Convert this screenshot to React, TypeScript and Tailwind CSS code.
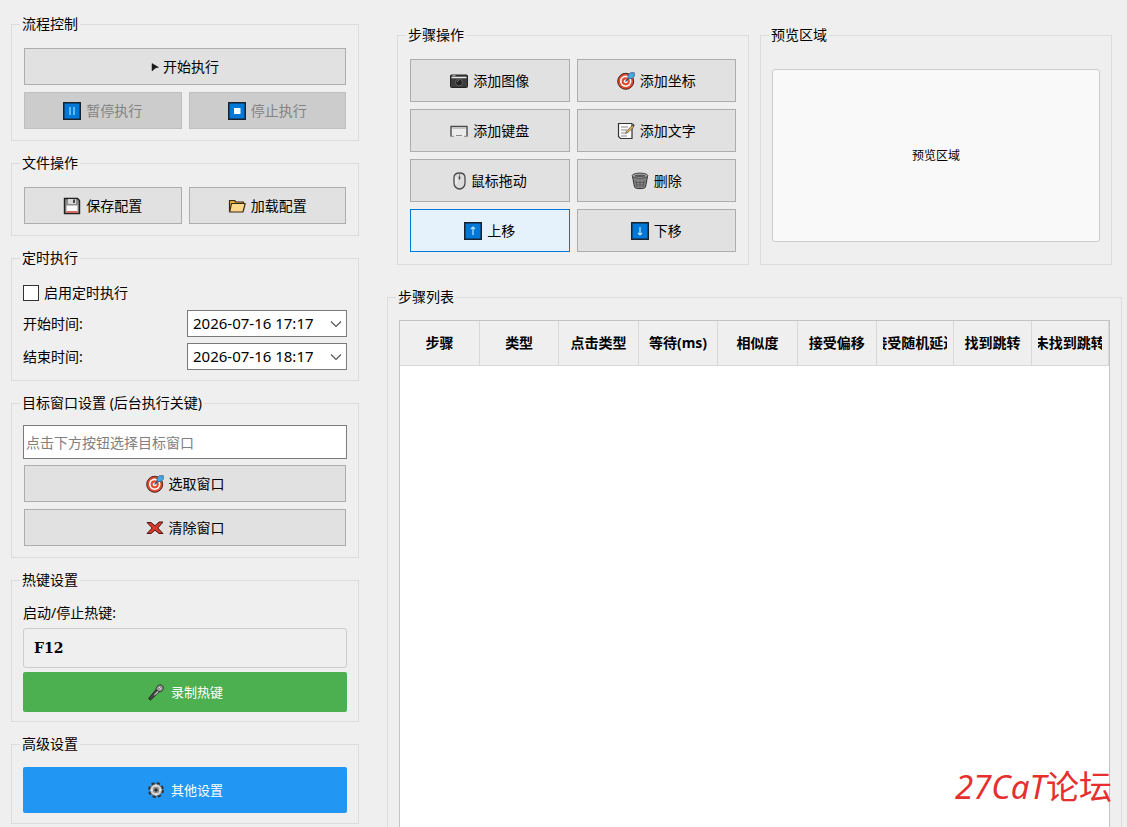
import { useState } from "react";
import type { ReactNode } from "react";
import clsx from "clsx";

type IconName =
  | "play" | "pause" | "stop" | "save" | "folder" | "target" | "cross" | "mic" | "gear"
  | "camera" | "keyboard" | "memo" | "mouse" | "trash" | "up" | "down";

const ICONS: Record<IconName, ReactNode> = {
  play: <path d="M1 5.500l6.500 3.800-3 .7L1 13z" fill="#1a1a1a" stroke="#1a1a1a" strokeWidth=".5" />,
  pause: (
    <>
      <rect x=".75" y=".75" width="16.500" height="16.500" fill="#0078d7" stroke="#16232e" strokeWidth="1.500" />
      <path d="M7 5v8M11 5v8" stroke="#7fd0ff" strokeWidth="1.500" />
    </>
  ),
  stop: (
    <>
      <rect x=".75" y=".75" width="16.500" height="16.500" fill="#0078d7" stroke="#16232e" strokeWidth="1.500" />
      <rect x="6" y="6" width="6.500" height="6" fill="#fff" />
    </>
  ),
  up: (
    <>
      <rect x=".75" y=".75" width="16.500" height="16.500" fill="#0078d7" stroke="#16232e" strokeWidth="1.500" />
      <path d="M9 13V5M7 7l2-2 2 2" fill="none" stroke="#b8e4ff" strokeWidth="1.200" />
    </>
  ),
  down: (
    <>
      <rect x=".75" y=".75" width="16.500" height="16.500" fill="#0078d7" stroke="#16232e" strokeWidth="1.500" />
      <path d="M9 5v8M7 11l2 2 2-2" fill="none" stroke="#b8e4ff" strokeWidth="1.200" />
    </>
  ),
  save: (
    <>
      <path d="M1.500 1.500h13L16.500 3.500v13h-15z" fill="#8c8c8c" stroke="#222" strokeWidth="1.400" />
      <rect x="5" y="2" width="8" height="5" fill="#d8d8d8" />
      <rect x="10" y="2.500" width="2" height="3.500" fill="#444" />
      <rect x="3.500" y="8.500" width="11" height="7.500" fill="#fafafa" />
      <path d="M3.500 15h11" stroke="#c8372d" strokeWidth="1.500" />
    </>
  ),
  folder: (
    <>
      <path d="M1.500 14.500V3.500h5l1.500 1.500h7.500V7" fill="#e5a93c" stroke="#3a2b14" strokeWidth="1.200" strokeLinejoin="round" />
      <path d="M1.700 15L3.500 6.500h13.700l-2.200 8.500z" fill="#fdd78b" stroke="#3a2b14" strokeWidth="1.200" strokeLinejoin="round" />
    </>
  ),
  target: (
    <>
      <circle cx="8.700" cy="9.300" r="8" fill="#e04a2f" stroke="#4a201a" />
      <circle cx="8.700" cy="9.300" r="5.700" fill="#fff" />
      <circle cx="8.700" cy="9.300" r="4.100" fill="#e04a2f" />
      <circle cx="8.700" cy="9.300" r="1.900" fill="#fff" />
      <path d="M8.500 9.500L13 5" stroke="#24577d" strokeWidth="1.300" />
      <path d="M11 6.500V3L13.500.7h3.800v3.500L15 6.500z" fill="#48a9e6" stroke="#24577d" strokeWidth=".7" />
    </>
  ),
  cross: <path d="M1 3.500h4L9 6.800 13 3h4l-5.200 6 5.200 5.500h-4L9 11.200l-4 3.300H1L6.200 9z" fill="#d8392b" stroke="#4a1712" strokeLinejoin="round" />,
  mic: (
    <>
      <path d="M1.500 15.500L9 6.500l3 2.500-8.500 8.200z" fill="#454545" stroke="#222" strokeWidth=".8" strokeLinejoin="round" />
      <path d="M9 6.500C9 3.500 12 1.500 14 2c2 .6 3 3 1.800 4.800-.8 1.400-2 2-3.800 2z" fill="#9b9b9b" stroke="#2b2b2b" />
      <path d="M7 12l3.500-4 1 1-3.800 3.500z" fill="#d5d5d5" />
      <path d="M12 4l2 2" stroke="#ddd" />
    </>
  ),
  gear: (
    <>
      <circle cx="9" cy="9" r="6.500" fill="none" stroke="#333" strokeWidth="3" strokeDasharray="3 2.100" />
      <circle cx="9" cy="9" r="6" fill="#d2d2d2" stroke="#4a4a4a" strokeWidth=".7" />
      <circle cx="9" cy="9" r="3.200" fill="#8a8a8a" />
      <circle cx="9" cy="9" r="1.500" fill="#222" />
      <path d="M9 3.500v2M9 12.500v2M3.500 9h2M12.500 9h2" stroke="#fff" />
    </>
  ),
  camera: (
    <>
      <rect x=".5" y="3" width="17" height="12.500" rx="1" fill="#3b3b3b" stroke="#222" />
      <path d="M1.500 5.500h15" stroke="#e6e6e6" strokeWidth="1.500" />
      <path d="M2.500 3.700h3" stroke="#bbb" />
      <circle cx="9" cy="10.500" r="3.500" fill="#222" stroke="#6c6c6c" strokeWidth=".8" />
      <path d="M7.500 9.500l1-1" stroke="#ccc" />
    </>
  ),
  keyboard: (
    <>
      <path d="M1 14.500V4.500h16v10" fill="#ececec" stroke="#4c4c4c" strokeWidth="1.400" />
      <path d="M2.500 6.500h13" stroke="#c2c2c2" />
      <path d="M1 14.300h3M6 13.500h6M14 14.300h3" stroke="#888" />
    </>
  ),
  memo: (
    <>
      <path d="M1.500 1.500h13.500v15h-11.500l-2-2z" fill="#fbfbfb" stroke="#333" strokeWidth="1.200" />
      <path d="M4 5h7M4 8h6M4 11h4M4 14h6" stroke="#8a8a8a" />
      <path d="M8.500 11.500l1-2.500 6-5.500 1.300 1.500-6 5.500z" fill="#f0b24d" stroke="#444" strokeWidth=".7" />
      <path d="M15 3.200l1.500-1.500 1.200 1.500-1.200 1.500z" fill="#444" />
    </>
  ),
  mouse: (
    <>
      <path d="M1 5.500C1 2.500 3 1 6.500 1S12 2.500 12 5.500V11c0 3.500-2.500 6-5.500 6S1 14.500 1 11z" fill="#dcdcdc" stroke="#4b4b4b" strokeWidth="1.300" />
      <path d="M6.500 2v6" stroke="#888" />
      <path d="M6.500 4.500v2.500" stroke="#444" strokeWidth="1.600" />
      <path d="M3 5v7" stroke="#fff" />
    </>
  ),
  trash: (
    <>
      <path d="M1.500 4.500l2 10.500c.5 2.200 10.500 2.200 11 0l2-10.500z" fill="#858585" stroke="#333" />
      <ellipse cx="9" cy="3.700" rx="7.800" ry="2.600" fill="#a8a8a8" stroke="#444" />
      <ellipse cx="9" cy="3.900" rx="5.500" ry="1.100" fill="#555" />
      <path d="M5 8l1 7M9 8v7.500M13 8l-1 7M4 10.500h10M4.500 13h9" stroke="#555" strokeWidth=".8" />
    </>
  ),
};

// narrow glyphs keep their own width so the label sits closer
const NARROW: Partial<Record<IconName, { box: string; width: string }>> = {
  play: { box: "0 0 9 18", width: "w-[9px]" },
  mouse: { box: "0 0 13 18", width: "w-[13px]" },
};

function Icon({ name }: { name: IconName }) {
  const narrow = NARROW[name];
  return (
    <svg
      className={clsx("h-[18px] shrink-0", narrow ? narrow.width : "w-[18px]")}
      viewBox={narrow ? narrow.box : "0 0 18 18"}
      aria-hidden="true"
    >
      {ICONS[name]}
    </svg>
  );
}

function Group({ title, className, children }: { title: string; className?: string; children: ReactNode }) {
  return (
    <fieldset className={clsx("min-w-0 border border-[#dcdcdc] px-[11px]", className)}>
      <legend className="-ml-[3px] px-0.5 leading-5">{title}</legend>
      {children}
    </fieldset>
  );
}

type ButtonProps = {
  icon: IconName;
  label: string;
  disabled?: boolean;
  active?: boolean;
  tall?: boolean;
};

function ToolButton({ icon, label, disabled, active, tall }: ButtonProps) {
  return (
    <button
      type="button"
      disabled={disabled}
      className={clsx(
        "flex items-center justify-center whitespace-nowrap border",
        icon === "play" ? "gap-[3px]" : "gap-[5px]",
        tall ? "h-[43px]" : "h-[37px]",
        disabled && "border-[#bfbfbf] bg-[#cccccc] text-[#838383]",
        active && "border-[#0078d7] bg-[#e5f1fb]",
        !disabled && !active && "border-[#adadad] bg-[#e1e1e1] hover:border-[#0078d7] hover:bg-[#e5f1fb]"
      )}
    >
      <Icon name={icon} />
      <span>{label}</span>
    </button>
  );
}

function TimeRow({ id, label, value }: { id: string; label: string; value: string }) {
  return (
    <div className="flex items-center justify-between">
      <label htmlFor={id}>{label}</label>
      <div className="relative w-40">
        <select
          id={id}
          defaultValue={value}
          className="block h-[27px] w-full appearance-none border border-[#7a7a7a] bg-white pb-0.5 pl-[5px] text-[15px] leading-5"
        >
          <option>{value}</option>
        </select>
        <svg className="pointer-events-none absolute right-[5px] top-2 h-3 w-3" viewBox="0 0 12 12" fill="none" stroke="#555" strokeWidth="1.200" aria-hidden="true">
          <path d="M1 3.500l5 5 5-5" />
        </svg>
      </div>
    </div>
  );
}

const STEP_BUTTONS: ButtonProps[] = [
  { icon: "camera", label: "添加图像" },
  { icon: "target", label: "添加坐标" },
  { icon: "keyboard", label: "添加键盘" },
  { icon: "memo", label: "添加文字" },
  { icon: "mouse", label: "鼠标拖动" },
  { icon: "trash", label: "删除" },
  { icon: "up", label: "上移", active: true },
  { icon: "down", label: "下移" },
];

const COLUMNS = ["步骤", "类型", "点击类型", "等待(ms)", "相似度", "接受偏移", "接受随机延迟", "找到跳转", "未找到跳转"];

export default function App() {
  const [timed, setTimed] = useState(false);

  return (
    <div className="relative flex h-screen gap-7 overflow-hidden bg-[#efefef] pl-[11px] pr-[5px] font-['Noto_Sans','Noto_Sans_CJK_SC',sans-serif] text-sm text-black">
      <aside className="flex w-[348px] shrink-0 flex-col gap-3 pt-3.5">
        <Group title="流程控制" className="pb-[11px]">
          <div className="grid grid-cols-2 gap-[7px] px-px pt-3.5">
            <div className="col-span-2 grid">
              <ToolButton icon="play" label="开始执行" />
            </div>
            <ToolButton icon="pause" label="暂停执行" disabled />
            <ToolButton icon="stop" label="停止执行" disabled />
          </div>
        </Group>

        <Group title="文件操作" className="pb-[11px]">
          <div className="grid grid-cols-2 gap-[7px] px-px pt-3.5">
            <ToolButton icon="save" label="保存配置" />
            <ToolButton icon="folder" label="加载配置" />
          </div>
        </Group>

        <Group title="定时执行" className="pb-2.5">
          <div className="flex flex-col gap-1.5 pt-3.5">
            <label className="flex h-[22px] items-center gap-[5px]">
              <input
                type="checkbox"
                checked={timed}
                onChange={(e) => setTimed(e.target.checked)}
                className="h-4 w-4 appearance-none border border-[#333] bg-white checked:bg-[#0078d7]"
              />
              启用定时执行
            </label>
            <TimeRow id="start-time" label="开始时间:" value="2026-07-16 17:17" />
            <TimeRow id="end-time" label="结束时间:" value="2026-07-16 18:17" />
          </div>
        </Group>

        <Group title="目标窗口设置 (后台执行关键)" className="pb-[11px]">
          <div className="flex flex-col gap-1.5 pt-3">
            <input
              type="text"
              readOnly
              aria-label="目标窗口"
              placeholder="点击下方按钮选择目标窗口"
              className="h-[34px] w-full border border-[#7a7a7a] bg-white px-0.5 placeholder:text-[#808080]"
            />
            <div className="grid gap-[7px] px-px">
              <ToolButton icon="target" label="选取窗口" />
              <ToolButton icon="cross" label="清除窗口" />
            </div>
          </div>
        </Group>

        <Group title="热键设置" className="pb-[9px]">
          <div className="flex flex-col gap-1 pt-3">
            <label htmlFor="hotkey" className="leading-[22px]">启动/停止热键:</label>
            <input
              id="hotkey"
              readOnly
              value="F12"
              className="h-10 w-full rounded-[3px] border border-[#cccccc] bg-[#efefef] px-2.5 font-['DejaVu_Serif',serif] font-bold"
            />
            <button type="button" className="flex h-10 items-center justify-center gap-1.5 rounded-[2px] bg-[#4caf50] text-[13px] text-white">
              <Icon name="mic" />
              录制热键
            </button>
          </div>
        </Group>

        <Group title="高级设置" className="pb-2.5">
          <div className="grid pt-[13px]">
            <button type="button" className="flex h-[46px] items-center justify-center gap-1.5 rounded-[2px] bg-[#2196f3] text-[13px] text-white">
              <Icon name="gear" />
              其他设置
            </button>
          </div>
        </Group>
      </aside>

      <main className="flex min-w-0 flex-1 flex-col gap-[22px] pt-[25px]">
        <div className="flex gap-[11px] px-2.5">
          <Group title="步骤操作" className="flex-1 pb-3">
            <div className="grid grid-cols-2 gap-[7px] px-px pt-3.5">
              {STEP_BUTTONS.map((b) => (
                <ToolButton key={b.label} {...b} tall />
              ))}
            </div>
          </Group>
          <Group title="预览区域" className="flex-1">
            <div className="pt-6">
              <div className="flex h-[173px] items-center justify-center rounded-[3px] border border-[#cccccc] bg-[#f9f9f9] text-xs">
                预览区域
              </div>
            </div>
          </Group>
        </div>

        <Group title="步骤列表" className="shrink-0 pb-3">
          <div className="pt-[13px]">
            <div className="min-h-[560px] border border-[#c3c3c3] bg-white">
              <table className="w-full table-fixed border-collapse">
                <thead>
                  <tr className="h-11 bg-[#efefef]">
                    {COLUMNS.map((c, i) => (
                      <th
                        key={c}
                        scope="col"
                        className={clsx("border-b border-r border-[#d8d8d8] px-1.5 font-bold", i < 6 ? "w-[11.2%]" : "w-[10.9%]")}
                      >
                        <div className="flex justify-center overflow-hidden whitespace-nowrap">
                          <span className="shrink-0">{c}</span>
                        </div>
                      </th>
                    ))}
                  </tr>
                </thead>
                <tbody />
              </table>
            </div>
          </div>
        </Group>
      </main>

      <div className="pointer-events-none absolute bottom-5 right-[15px] text-[33px] leading-10 text-[#e5302f]">
        <span className="italic">27CaT</span>论坛
      </div>
    </div>
  );
}
